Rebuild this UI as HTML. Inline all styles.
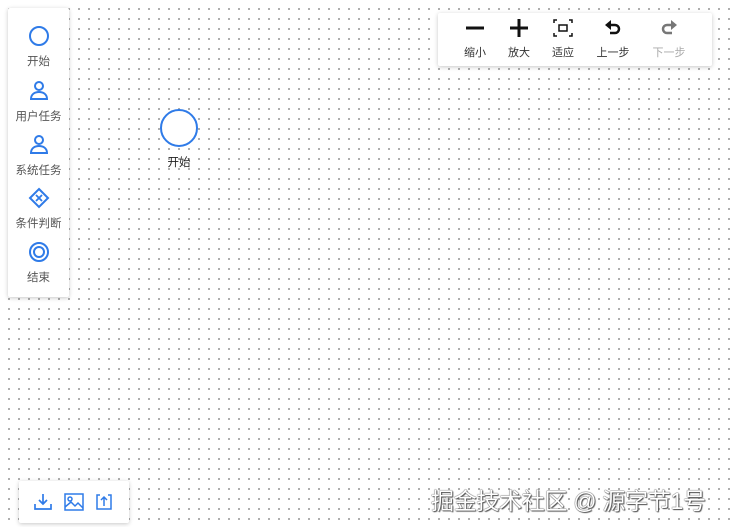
<!DOCTYPE html>
<html><head><meta charset="utf-8"><style>
*{margin:0;padding:0;box-sizing:border-box}
body{width:730px;height:527px;overflow:hidden;position:relative;background:#fff;
background-image:radial-gradient(circle,#9a9a9a 0.9px,transparent 1.1px);background-size:10px 10px;background-position:4px 4px;
font-family:"Liberation Sans","Noto Sans CJK SC",sans-serif}
.panel{position:absolute;background:#fff;box-shadow:0 1px 4px rgba(0,0,0,.22);border-radius:2px}
.item{position:absolute;left:0;width:61px;text-align:center;font-size:11.5px;color:#555}
.item svg{display:block;margin:0 auto}
.tb{position:absolute;top:0;width:50px;text-align:center;font-size:11px;color:#333}
.tb svg{display:block;margin:4px auto 5px}
</style></head><body>
<div class="panel" style="left:8px;top:8px;width:61px;height:289px">
 <div class="item" style="top:17px"><svg width="22" height="22"><circle cx="11" cy="11" r="9" fill="none" stroke="#2f7be8" stroke-width="2"/></svg><div style="margin-top:6px">开始</div></div>
 <div class="item" style="top:72px"><svg width="22" height="22"><circle cx="11" cy="6" r="4" fill="none" stroke="#2f7be8" stroke-width="2"/><path d="M3 19c0-5 4-7 8-7s8 2 8 7z" fill="none" stroke="#2f7be8" stroke-width="2"/></svg><div style="margin-top:6px">用户任务</div></div>
 <div class="item" style="top:126px"><svg width="22" height="22"><circle cx="11" cy="6" r="4" fill="none" stroke="#2f7be8" stroke-width="2"/><path d="M3 19c0-5 4-7 8-7s8 2 8 7z" fill="none" stroke="#2f7be8" stroke-width="2"/></svg><div style="margin-top:6px">系统任务</div></div>
 <div class="item" style="top:179px"><svg width="22" height="22"><path d="M11 2l9 9-9 9-9-9z" fill="none" stroke="#2f7be8" stroke-width="2"/><path d="M8 8l6 6M14 8l-6 6" stroke="#2f7be8" stroke-width="1.8"/></svg><div style="margin-top:6px">条件判断</div></div>
 <div class="item" style="top:233px"><svg width="22" height="22"><circle cx="11" cy="11" r="9" fill="none" stroke="#2f7be8" stroke-width="2"/><circle cx="11" cy="11" r="5" fill="none" stroke="#2f7be8" stroke-width="2"/></svg><div style="margin-top:6px">结束</div></div>
</div>
<svg style="position:absolute;left:158px;top:108px" width="42" height="42"><circle cx="21" cy="20" r="18" fill="#fff" stroke="#2f7be8" stroke-width="2"/></svg>
<div style="position:absolute;left:160px;top:154px;width:38px;text-align:center;font-size:11.5px;color:#222">开始</div>
<div class="panel" style="left:438px;top:13px;width:274px;height:53px">
 <div class="tb" style="left:12px"><svg width="22" height="22"><path d="M2 11h18" stroke="#111" stroke-width="3"/></svg>缩小</div>
 <div class="tb" style="left:56px"><svg width="22" height="22"><path d="M2 11h18M11 2v18" stroke="#111" stroke-width="3"/></svg>放大</div>
 <div class="tb" style="left:100px"><svg width="22" height="22" fill="none" stroke="#111" stroke-width="1.5"><path d="M2 6V3h3M17 3h3v3M20 16v3h-3M5 19H2v-3M7 8h8v6H7z"/></svg>适应</div>
 <div class="tb" style="left:150px"><svg width="22" height="22"><path d="M9 3L3 8l6 5z" fill="#111"/><path d="M7 8h6a4 4 0 010 8H8" fill="none" stroke="#111" stroke-width="2.5"/></svg>上一步</div>
 <div class="tb" style="left:206px;color:#aaa"><svg width="22" height="22"><path d="M13 3l6 5-6 5z" fill="#777"/><path d="M15 8H9a4 4 0 000 8h5" fill="none" stroke="#777" stroke-width="2.5"/></svg>下一步</div>
</div>
<div class="panel" style="left:19px;top:481px;width:110px;height:42px">
 <svg style="position:absolute;left:14px;top:11px" width="20" height="20" fill="none" stroke="#2f7be8" stroke-width="1.7"><path d="M10 2v10M6 8l4 4 4-4M2 12v5h16v-5"/></svg>
 <svg style="position:absolute;left:45px;top:12px" width="20" height="18" fill="none" stroke="#2f7be8" stroke-width="1.5"><rect x="1" y="1" width="18" height="16"/><circle cx="6" cy="6" r="2"/><path d="M1 14l6-5 4 4 3-3 5 5"/></svg>
 <svg style="position:absolute;left:76px;top:12px" width="18" height="18" fill="none" stroke="#2f7be8" stroke-width="1.5"><path d="M5 2H2v14h14V2h-3M9 13V4M6 7l3-3 3 3"/></svg>
</div>
<div style="position:absolute;left:431px;top:482px;font-size:23px;letter-spacing:-0.3px;color:#fff;text-shadow:0 0 1px #444,0 0 1px #444,1px 1px 1px #555;white-space:nowrap">掘金技术社区 @ 源字节1号</div>
</body></html>
